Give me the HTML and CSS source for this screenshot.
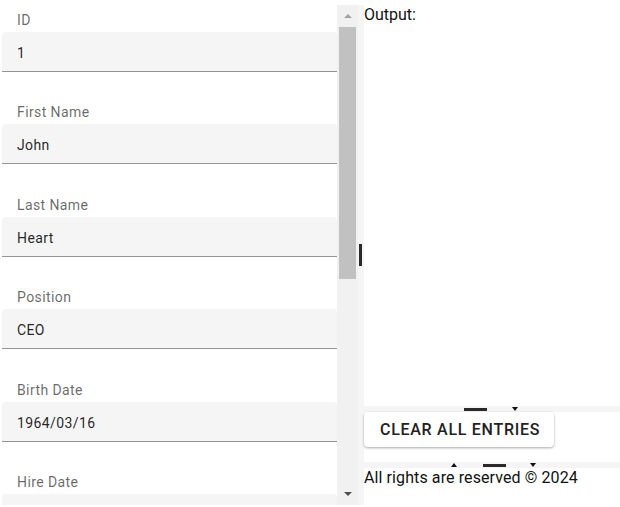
FILE: index.html
```html
<!DOCTYPE html>
<html>
<head>
<meta charset="utf-8">
<link rel="stylesheet" href="styles.css">
</head>
<body>
<div class="app">
  <div class="left">
    <div class="form">
      <div class="item"><div class="label">ID</div><div class="field">1</div></div>
      <div class="item"><div class="label">First Name</div><div class="field">John</div></div>
      <div class="item"><div class="label">Last Name</div><div class="field">Heart</div></div>
      <div class="item"><div class="label">Position</div><div class="field">CEO</div></div>
      <div class="item"><div class="label">Birth Date</div><div class="field">1964/03/16</div></div>
      <div class="item"><div class="label">Hire Date</div><div class="field"></div></div>
    </div>
    <div class="scrollbar">
      <div class="sb-btn"><span class="sb-up"></span></div>
      <div class="sb-thumb"></div>
      <div class="sb-rest"></div>
      <div class="sb-btn"><span class="sb-down"></span></div>
    </div>
  </div>
  <div class="vsplit"><span class="vhandle"></span></div>
  <div class="right">
    <div class="output">Output:</div>
    <div class="hsplit one">
      <span class="hhandle"></span>
      <span class="tri-down"></span>
    </div>
    <div class="buttons">
      <button class="btn">CLEAR ALL ENTRIES</button>
    </div>
    <div class="hsplit two">
      <span class="tri-up"></span>
      <span class="hhandle"></span>
      <span class="tri-down"></span>
    </div>
    <div class="footer">All rights are reserved © 2024</div>
  </div>
</div>
</body>
</html>
```

FILE: styles.css
```css
html, body {
  margin: 0;
  padding: 0;
  background: #fff;
}
body {
  font-family: "Roboto", "Liberation Sans", sans-serif;
  color: #212121;
  overflow: hidden;
}
.app {
  display: flex;
  height: 500px;
  margin-top: 5px;
}
.left {
  display: flex;
  width: 358px;
  flex: none;
}
.form {
  width: 335px;
  padding: 7px 0 0 2px;
  overflow: hidden;
}
.item {
  margin-bottom: 32.4px;
}
.label {
  font-size: 14px;
  line-height: 17px;
  letter-spacing: 0.4px;
  color: rgba(0, 0, 0, 0.6);
  padding-left: 15px;
  margin-bottom: 3px;
}
.field {
  height: 39px;
  line-height: 42px;
  overflow: hidden;
  background: #f5f5f5;
  border-bottom: 1px solid #949494;
  border-radius: 4px 4px 0 0;
  font-size: 14px;
  letter-spacing: 0.4px;
  color: rgba(0, 0, 0, 0.87);
  padding-left: 15px;
}
.scrollbar {
  width: 21px;
  background: #f1f1f1;
  display: flex;
  flex-direction: column;
}
.sb-btn {
  height: 22px;
  display: flex;
  align-items: center;
  justify-content: center;
}
.sb-up {
  width: 0;
  height: 0;
  border-left: 4px solid transparent;
  border-right: 4px solid transparent;
  border-bottom: 4px solid #a3a3a3;
}
.sb-down {
  width: 0;
  height: 0;
  border-left: 4px solid transparent;
  border-right: 4px solid transparent;
  border-top: 4px solid #505050;
}
.sb-thumb {
  height: 252px;
  margin: 0 2px;
  background: #c1c1c1;
}
.sb-rest {
  flex: 1;
}
.vsplit {
  width: 6px;
  flex: none;
  background: #f5f5f5;
  display: flex;
  align-items: center;
}
.vhandle {
  width: 3px;
  height: 22px;
  margin-left: 1px;
  background: #2a2a2a;
}
.right {
  flex: 1;
  display: flex;
  flex-direction: column;
}
.output {
  height: 401px;
  font-size: 16px;
  color: #111;
}
.hsplit {
  height: 6px;
  background: #f5f5f5;
  display: flex;
  align-items: center;
}
.hsplit.one {
  padding-left: 100px;
}
.hsplit.one .tri-down {
  margin-left: 25px;
}
.hsplit.two {
  padding-left: 87px;
}
.hsplit.two .hhandle {
  margin-left: 26px;
}
.hsplit.two .tri-down {
  margin-left: 24px;
}
.hhandle {
  width: 23px;
  height: 3px;
  background: #2a2a2a;
}
.tri-down {
  width: 0;
  height: 0;
  border-left: 3.5px solid transparent;
  border-right: 3.5px solid transparent;
  border-top: 4px solid #111;
}
.tri-up {
  width: 0;
  height: 0;
  border-left: 3.5px solid transparent;
  border-right: 3.5px solid transparent;
  border-bottom: 4px solid #111;
}
.buttons {
  height: 50px;
}
.btn {
  display: block;
  height: 35px;
  padding: 0 14px 0 16px;
  border: 0;
  border-radius: 4px;
  background: #fff;
  box-shadow: 0 1px 3px rgba(0, 0, 0, 0.24), 0 1px 2px rgba(0, 0, 0, 0.12);
  font-family: "Roboto", "Liberation Sans", sans-serif;
  font-size: 16px;
  font-weight: 500;
  letter-spacing: 0.72px;
  color: #212121;
}
.footer {
  flex: 1;
  font-size: 16px;
  letter-spacing: 0.1px;
  color: #111;
}
```
